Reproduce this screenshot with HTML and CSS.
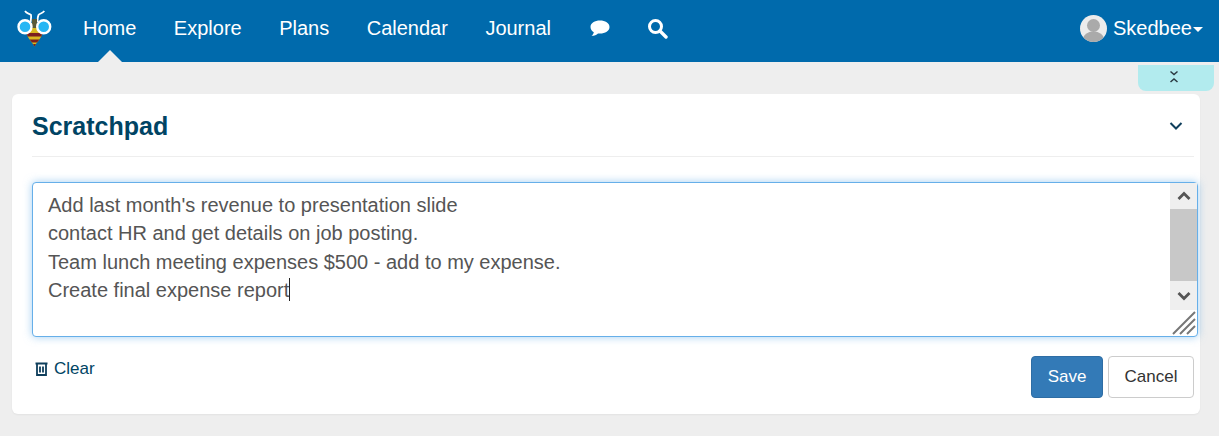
FILE: index.html
```html
<!DOCTYPE html>
<html lang="en">
<head>
<meta charset="utf-8">
<title>Scratchpad</title>
<link rel="stylesheet" href="styles.css">
</head>
<body>
<header class="nav">
  <svg class="logo" width="36" height="48" viewBox="0 0 36 48">
    <path d="M9 7C11 10 13 9 15 11C15.500 13 15 15 14.500 18M28.300 7C26 10 24 9 22.500 11C21.500 13 21.500 15 21.500 18" fill="none" stroke="#fff" stroke-width="1.800"/>
    <path d="M11 19H26V29C26 34 21.500 37 18.500 42.500C15.500 37 11 34 11 29Z" fill="#d9b81f"/>
    <path d="M11 29H26L25.500 32.500H11.500Z" fill="#7b1f1f"/>
    <path d="M13.500 35.500H23.500L21 38.500H16Z" fill="#7b1f1f"/>
    <path d="M17 40H20L18.500 42.500Z" fill="#7b1f1f"/>
    <path d="M16 15H21V24H16Z" fill="#5a5a3a"/>
    <circle cx="9" cy="22.700" r="6.500" fill="#27b6f4" stroke="#fff" stroke-width="2.400"/>
    <circle cx="27.700" cy="22.700" r="6.500" fill="#27b6f4" stroke="#fff" stroke-width="2.400"/>
  </svg>
  <nav class="menu">
    <a class="item active" href="#">Home</a>
    <a class="item" href="#">Explore</a>
    <a class="item" href="#">Plans</a>
    <a class="item" href="#">Calendar</a>
    <a class="item" href="#">Journal</a>
    <a class="item icon-item icon-chat" href="#" aria-label="Messages">
      <svg width="20" height="18" viewBox="0 0 20 18"><path d="M10 1.500C15.200 1.500 19.500 4 19.500 8C19.500 12 15.200 14.500 10 14.500L8 14.400C6.500 15.800 4.500 16.700 1.500 16.800C3 15.500 3.700 14.300 3.800 13.200C1.800 12 .500 10.200 .500 8C.500 4 4.800 1.500 10 1.500Z" fill="#fff"/></svg>
    </a>
    <a class="item icon-item" href="#" aria-label="Search">
      <svg width="21" height="21" viewBox="0 0 21 21"><circle cx="8.500" cy="8.500" r="6" fill="none" stroke="#fff" stroke-width="3"/><path d="M13 13L19 19" stroke="#fff" stroke-width="3.400" stroke-linecap="round"/></svg>
    </a>
  </nav>
  <div class="user">
    <svg class="avatar" width="27" height="27" viewBox="0 0 27 27">
      <defs><clipPath id="avatar-clip"><circle cx="13.500" cy="13.500" r="13.500"/></clipPath></defs>
      <circle cx="13.500" cy="13.500" r="13.500" fill="#ececec"/>
      <g clip-path="url(#avatar-clip)" fill="#aaa"><circle cx="13.500" cy="10.500" r="6.500"/><ellipse cx="13.500" cy="24" rx="10.500" ry="7.500"/></g>
    </svg>
    <span>Skedbee</span>
    <i class="caret-down"></i>
  </div>
</header>

<div class="tab-row">
  <button class="collapse-tab" aria-label="Collapse">
    <svg width="10" height="14" viewBox="0 0 10 14"><path d="M1.500 1.500L5 4.500L8.500 1.500M1.500 12L5 9L8.500 12" fill="none" stroke="#2b3a42" stroke-width="1.500"/></svg>
  </button>
</div>

<main class="card">
  <div class="card-head">
    <h1>Scratchpad</h1>
    <svg class="chevron" width="14" height="10" viewBox="0 0 14 10"><path d="M1.500 2L7 7.500L12.500 2" fill="none" stroke="#0f3f5c" stroke-width="2"/></svg>
  </div>
  <div class="editor">
    <div class="editor-text">
      <div>Add last month's revenue to presentation slide</div>
      <div>contact HR and get details on job posting.</div>
      <div>Team lunch meeting expenses $500 - add to my expense.</div>
      <div>Create final expense report<span class="text-caret"></span></div>
    </div>
    <div class="side">
      <div class="scrollbar">
        <div class="arrow"><svg width="14" height="10" viewBox="0 0 14 10"><path d="M1.500 8L7 2.500L12.500 8" fill="none" stroke="#555" stroke-width="2.800"/></svg></div>
        <div class="thumb"></div>
        <div class="arrow"><svg width="14" height="10" viewBox="0 0 14 10"><path d="M1.500 2L7 7.500L12.500 2" fill="none" stroke="#555" stroke-width="2.800"/></svg></div>
      </div>
      <svg class="resizer" width="24" height="24" viewBox="0 0 24 24"><path d="M1 23L23 1M8 23L23 8M15 23L23 15" stroke="#777" stroke-width="2"/></svg>
    </div>
  </div>
  <div class="actions">
    <a class="clear" href="#">
      <svg class="clear-icon" width="13" height="14" viewBox="0 0 13 14"><path d="M.500 1.500H12.500M2 2V13H11V2M5 4.500V10.500M8 4.500V10.500" fill="none" stroke="#0f3f5c" stroke-width="1.800"/></svg>
      Clear
    </a>
    <div class="buttons">
      <button class="btn btn-save">Save</button>
      <button class="btn btn-cancel">Cancel</button>
    </div>
  </div>
</main>
</body>
</html>
```

FILE: styles.css
```css
* { box-sizing: border-box; }
html, body { margin: 0; height: 436px; overflow: hidden; }
body {
  background: #eeeeee;
  font-family: "Liberation Sans", Arial, sans-serif;
  color: #333;
}
.nav {
  height: 62px;
  background: #006aac;
  display: flex;
  align-items: center;
  padding: 0 16px 0 15px;
}
.logo { margin: -6px 0 0 1px; flex: none; }
.menu { display: flex; align-items: center; height: 100%; margin-left: 31px; gap: 37.500px; }
.item {
  position: relative;
  color: #fff;
  text-decoration: none;
  font-size: 20px;
  line-height: 24px;
  height: 100%;
  display: flex;
  align-items: center;
  padding-bottom: 6px;
}
.active::after {
  content: "";
  position: absolute;
  left: 50%;
  bottom: 0;
  margin-left: -12px;
  border: 12px solid transparent;
  border-top: 0;
  border-bottom-color: #eee;
}
.icon-item svg { display: block; }
.icon-chat { margin: 0 -1px 0 2px; }
.user {
  margin-left: auto;
  display: flex;
  align-items: center;
  color: #fff;
  font-size: 20px;
  margin-top: -6px;
}
.avatar { margin-right: 6px; }
.caret-down {
  margin-left: 1px;
  margin-top: 3px;
  border: 5px solid transparent;
  border-top-color: #fff;
  border-bottom: 0;
}
.tab-row { height: 32px; padding: 3px 5px 0 0; display: flex; justify-content: flex-end; }
.collapse-tab {
  width: 76px;
  height: 26px;
  padding: 0 4px 2px 0;
  border: 0;
  background: #b2ebee;
  border-radius: 0 0 8px 8px;
  display: flex;
  align-items: center;
  justify-content: center;
}
.card {
  margin: 0 19px 0 12px;
  height: 320px;
  background: #fff;
  border-radius: 6px;
  padding: 0 6px 0 20px;
  box-shadow: 0 1px 2px rgba(0, 0, 0, .05);
}
.card-head {
  height: 63px;
  border-bottom: 1px solid #eeeeee;
  display: flex;
  align-items: center;
  justify-content: space-between;
  padding: 2px 11px 0 0;
}
.card-head h1 {
  margin: 0;
  font-size: 25px;
  line-height: 30px;
  font-weight: 700;
  color: #004464;
}
.chevron { margin-top: -1px; }
.editor {
  margin: 25px -4px 0 0;
  height: 155px;
  border: 1px solid #66afe9;
  border-radius: 4px;
  box-shadow: 0 0 8px rgba(102, 175, 233, .6);
  display: flex;
  justify-content: space-between;
  background: #fff;
}
.editor-text {
  padding: 8px 15px;
  font-size: 20px;
  line-height: 28.300px;
  color: #555;
}
.text-caret {
  display: inline-block;
  width: 1px;
  height: 23px;
  background: #222;
  vertical-align: -4px;
}
.side {
  width: 27px;
  position: relative;
  display: flex;
  flex-direction: column;
}
.scrollbar { width: 27px; height: 127px; background: #efefef; display: flex; flex-direction: column; }
.arrow { height: 26px; display: flex; align-items: center; justify-content: center; }
.thumb { height: 72px; background: #c8c8c8; flex: none; }
.scrollbar .arrow:last-child { height: 29px; }
.resizer { position: absolute; right: 1px; bottom: 1px; }
.actions {
  display: flex;
  justify-content: space-between;
  align-items: flex-start;
  padding: 19px 0 0 2px;
}
.clear {
  color: #004464;
  text-decoration: none;
  font-size: 17px;
  line-height: 24px;
  display: flex;
  align-items: center;
  gap: 7px;
  margin-top: 1px;
}
.clear-icon { margin-left: 1px; margin-right: -1px; }
.buttons { display: flex; gap: 5px; }
.btn {
  height: 42px;
  font-family: inherit;
  font-size: 17px;
  border-radius: 4px;
  padding: 0;
}
.btn-save { width: 72px; background: #337ab7; border: 1px solid #2e6da4; color: #fff; }
.btn-cancel { width: 86px; background: #fff; border: 1px solid #ccc; color: #333; }
```
